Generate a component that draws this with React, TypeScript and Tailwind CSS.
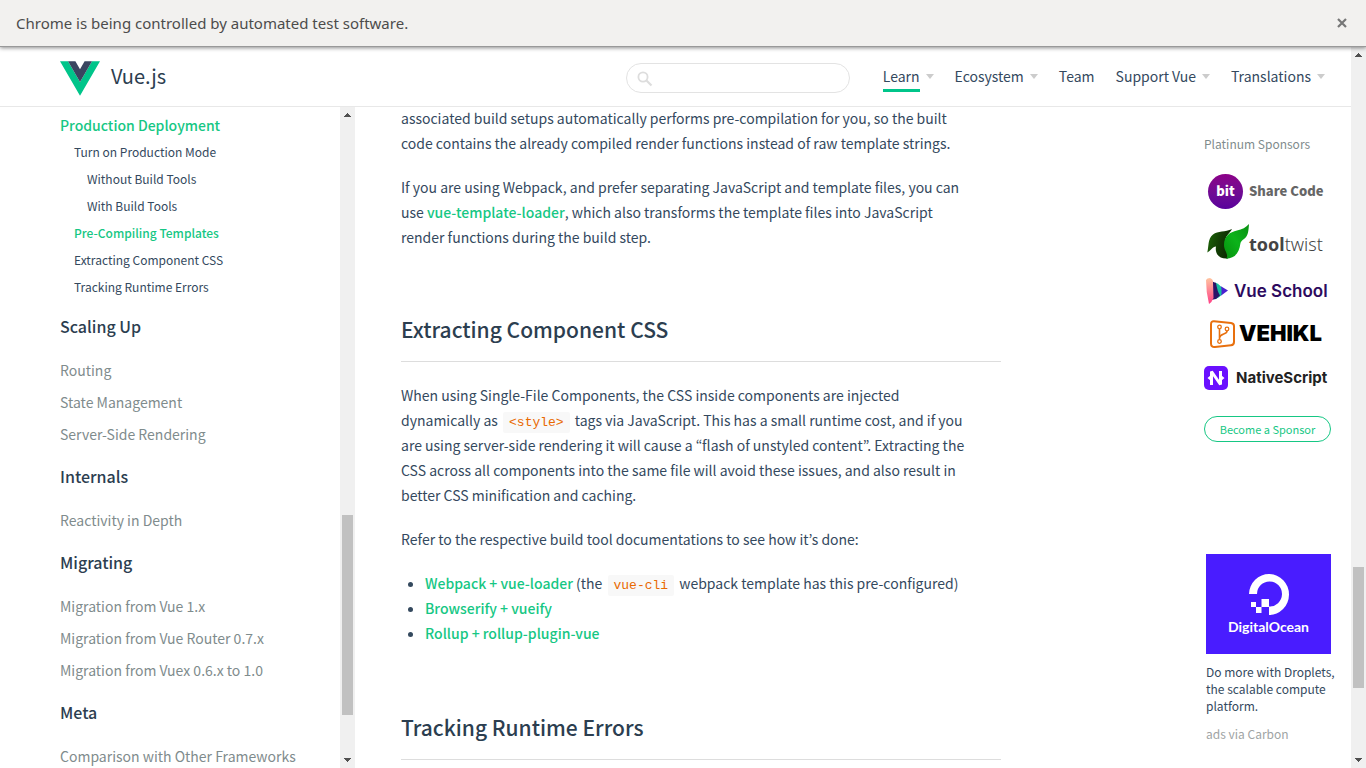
import React from "react";

const sans = "font-['Noto_Sans_CJK_JP','Noto_Sans',sans-serif]";

function Caret() {
  return (
    <svg width="8" height="5" viewBox="0 0 8 5" className="mt-0.5 ml-1.5" aria-hidden="true">
      <path d="M0 0H8L4 5Z" fill="#ccc" />
    </svg>
  );
}

function VueLogo() {
  return (
    <svg width="40" height="35" viewBox="0 0 400 346" className="mt-0.5" aria-hidden="true">
      <path d="M0 0H80L200 208L320 0H400L200 346Z" fill="#00c58a" />
      <path d="M80 0H154L200 80L246 0H320L200 208Z" fill="#3a4560" />
    </svg>
  );
}

function Arrow({ down }: { down?: boolean }) {
  return (
    <svg width="7" height="4" viewBox="0 0 7 4" shapeRendering="crispEdges" aria-hidden="true">
      <path d={down ? "M0 0H7V1H6V2H5V3H4V4H3V3H2V2H1V1H0Z" : "M3 0H4V1H5V2H6V3H7V4H0V3H1V2H2V1H3Z"} fill="#505050" />
    </svg>
  );
}

function ScrollTrack({ above, thumb, below }: { above: string; thumb: string; below: string }) {
  return (
    <div className="flex w-[15px] shrink-0 flex-col items-center bg-[#f0f0f0] py-1.5" aria-hidden="true">
      <Arrow />
      <div className={above} />
      <div className={"w-[11px] bg-[#c1c1c1] " + thumb} />
      <div className={below} />
      <Arrow down />
    </div>
  );
}

const nav = [
  { label: "Learn", menu: true, active: true },
  { label: "Ecosystem", menu: true },
  { label: "Team" },
  { label: "Support Vue", menu: true },
  { label: "Translations", menu: true },
];

function Header() {
  return (
    <header className="flex h-[60px] shrink-0 items-center border-b border-[#e8e8e8] bg-white pt-0.5 pr-[26px] pl-[60px]">
      <a href="#" className="flex items-center gap-[11px] text-xl text-[#2c3e50]">
        <VueLogo />
        <span className="pb-1">Vue.js</span>
      </a>
      <div className="relative ml-auto">
        <svg width="16" height="16" viewBox="0 0 16 16" className="absolute top-2 left-[11px]" aria-hidden="true">
          <circle cx="6" cy="6" r="4.6" fill="none" stroke="#ddd" strokeWidth="1.8" />
          <path d="M9.5 9.5L14.5 14.5" stroke="#ddd" strokeWidth="2.2" />
        </svg>
        <input
          type="text"
          aria-label="Search"
          className="block h-[30px] w-56 rounded-full border border-[#e3e3e3] bg-transparent pr-4 pl-8 text-sm outline-none"
        />
      </div>
      <nav className="ml-[33px] flex items-center gap-[21px] pb-1 text-sm leading-6 text-[#34495e]">
        {nav.map((n) => (
          <div key={n.label} className="flex items-center">
            <a href="#" className={n.active ? "border-b-3 border-[#00c58a] pt-1 pb-px" : ""}>
              {n.label}
            </a>
            {n.menu && <Caret />}
          </div>
        ))}
      </nav>
    </header>
  );
}

const sub = [
  { label: "Turn on Production Mode", cls: "pl-3.5" },
  { label: "Without Build Tools", cls: "pl-[27px]" },
  { label: "With Build Tools", cls: "pl-[27px]" },
  { label: "Pre-Compiling Templates", cls: "pl-3.5 font-medium text-[#16c784]" },
  { label: "Extracting Component CSS", cls: "pl-3.5" },
  { label: "Tracking Runtime Errors", cls: "pl-3.5" },
];

const groups = [
  { title: "Scaling Up", items: ["Routing", "State Management", "Server-Side Rendering"] },
  { title: "Internals", items: ["Reactivity in Depth"] },
  { title: "Migrating", items: ["Migration from Vue 1.x", "Migration from Vue Router 0.7.x", "Migration from Vuex 0.6.x to 1.0"] },
  { title: "Meta", items: ["Comparison with Other Frameworks"] },
];

function Sidebar() {
  return (
    <div className="w-[340px] shrink-0 overflow-hidden pt-1 pl-[60px]">
      <a href="#" className="flex h-[27px] items-center text-sm font-medium text-[#16c784]">
        Production Deployment
      </a>
      <ul className="text-xs text-[#34495e]">
        {sub.map((s) => (
          <li key={s.label} className={"flex h-[27px] items-center " + s.cls}>
            <a href="#">{s.label}</a>
          </li>
        ))}
      </ul>
      {groups.map((g) => (
        <section key={g.title}>
          <h3 className="mt-3 mb-3.5 flex h-7 items-center text-base font-medium text-[#2c3e50]">{g.title}</h3>
          <ul className="text-sm text-[#7f8c8d]">
            {g.items.map((i) => (
              <li key={i} className="flex h-8 items-center">
                <a href="#">{i}</a>
              </li>
            ))}
          </ul>
        </section>
      ))}
    </div>
  );
}

function Code({ children }: { children: string }) {
  return (
    <code className="mx-0.5 rounded-xs bg-[#f8f8f8] px-1.5 py-[3px] font-['Liberation_Mono',monospace] text-[13px] leading-none text-[#e96900]">
      {children}
    </code>
  );
}

function Link({ children }: { children: string }) {
  return (
    <a href="#" className="font-medium text-[#16c784]">
      {children}
    </a>
  );
}

function Article() {
  return (
    <main className="min-w-0 flex-1 overflow-hidden pl-[46px] text-sm leading-[25px] text-[#34495e]">
      <div className="-mt-px max-w-[600px]">
        <p className="mb-[19px] max-w-[572px]">
          associated build setups automatically performs pre-compilation for you, so the built code contains the already
          compiled render functions instead of raw template strings.
        </p>
        <p className="max-w-[572px]">
          If you are using Webpack, and prefer separating JavaScript and template files, you can use{" "}
          <Link>vue-template-loader</Link>, which also transforms the template files into JavaScript render functions
          during the build step.
        </p>
        <h2 className="mt-[63px] mb-[21px] border-b border-[#ddd] pb-4 text-[21px] leading-8 font-medium text-[#2c3e50]">
          Extracting Component CSS
        </h2>
        <p className="mb-[19px] max-w-[572px]">
          When using Single-File Components, the CSS inside components are injected dynamically as{" "}
          <Code>{"<style>"}</Code> tags via JavaScript. This has a small runtime cost, and if you are using server-side
          rendering it will cause a “flash of unstyled content”. Extracting the CSS across all components into the same
          file will avoid these issues, and also result in better CSS minification and caching.
        </p>
        <p className="mb-[19px]">Refer to the respective build tool documentations to see how it’s done:</p>
        <ul className="list-disc pl-6">
          <li>
            <Link>Webpack + vue-loader</Link> (the <Code>vue-cli</Code> webpack template has this pre-configured)
          </li>
          <li>
            <Link>Browserify + vueify</Link>
          </li>
          <li>
            <Link>Rollup + rollup-plugin-vue</Link>
          </li>
        </ul>
        <h2 className="mt-[65px] border-b border-[#ddd] pb-4 text-[21px] leading-8 font-medium text-[#2c3e50]">
          Tracking Runtime Errors
        </h2>
      </div>
    </main>
  );
}

function Sponsors() {
  return (
    <aside className="mr-5 w-[127px] shrink-0 pt-[27px] text-xs">
      <h4 className="leading-5 text-[#7f8c8d]">Platinum Sponsors</h4>
      <a href="#" className="mt-5 flex h-[35px] items-center gap-1.5 pl-1 text-[13px] font-black text-[#666]">
        <span className="flex size-[35px] shrink-0 items-center justify-center rounded-full bg-linear-to-b from-[#8c0088] to-[#59009c] pb-0.5 text-white">
          bit
        </span>
        <span className="pb-0.5 whitespace-nowrap">Share Code</span>
      </a>
      <a href="#" className="mt-[15px] flex h-9 items-center pl-[3px] font-['Noto_Sans',sans-serif] text-lg text-[#444]">
        <svg width="42" height="36" viewBox="0 0 42 36" className="shrink-0" aria-hidden="true">
          <defs>
            <linearGradient id="leafDark" x1="0" y1="0" x2="1" y2="0.3">
              <stop offset="0" stopColor="#1f6a0a" />
              <stop offset="0.6" stopColor="#123c04" />
              <stop offset="1" stopColor="#0a2a00" />
            </linearGradient>
            <linearGradient id="leafLight" x1="0" y1="1" x2="1" y2="0">
              <stop offset="0" stopColor="#06900e" />
              <stop offset="0.5" stopColor="#0cb31a" />
              <stop offset="1" stopColor="#089012" />
            </linearGradient>
          </defs>
          <path d="M0.3 28.5C2 22 0.5 15 6 10.5C11 6.500 18 8.500 25 5C23 9 19 11 18.500 16C18 22 21 28 21 34.500C13 35.500 7.500 30 9 22.500C5.500 22.500 3.500 27 0.3 28.500Z" fill="url(#leafDark)" />
          <path d="M42 0C41.500 6 41.500 12 37 15C35 16.500 33.500 17.500 33.300 20C32.500 27 29 34.500 19 34.800C22.500 31 17 27 17 21C17 12 23 8 30 6.500C35 5.500 39 3.500 42 0Z" fill="url(#leafLight)" />
        </svg>
        <span className="pt-1">
          <b>tool</b>
          <span className="font-light">twist</span>
        </span>
      </a>
      <a href="#" className="mt-[18px] flex h-[26px] items-center gap-1.5 pl-0.5 font-['Inter',sans-serif] text-[17px] font-semibold text-[#2d0a5e]">
        <svg width="22" height="26" viewBox="0 0 22 26" className="shrink-0" aria-hidden="true">
          <defs>
            <linearGradient id="peach" x1="0" y1="0" x2="0" y2="1">
              <stop offset="0" stopColor="#ffc5a0" />
              <stop offset="1" stopColor="#ff3f86" />
            </linearGradient>
          </defs>
          <path d="M14.500 8L22 12.500L14.500 18Z" fill="#4b20d0" />
          <path d="M9 4.500Q15.500 7 15.500 11V16Q15 19 9 21Z" fill="#16bfa0" />
          <path d="M5 3L10 5Q11.500 14 14 17.500L10 21L5 22Z" fill="#2c1268" />
          <path d="M0 2Q1 0 4 0Q7 1 7 4L7.500 20Q6 24 3 26Q0 14 0 2Z" fill="url(#peach)" />
        </svg>
        <span className="whitespace-nowrap">Vue School</span>
      </a>
      <a href="#" className="mt-4 flex h-7 items-center gap-1 pl-1.5 font-['Inter',sans-serif] text-[22px] font-black text-black">
        <svg width="25" height="28" viewBox="0 0 25 28" className="shrink-0" fill="none" stroke="#e8700e" aria-hidden="true">
          <path d="M4 1.2L21 3Q24 3.4 24 6V22Q24 25 21 25.3L5 27Q1 27.2 1 23.5V4.500Q1 1 4 1.2Z" strokeWidth="2" />
          <circle cx="9.500" cy="7" r="1.800" strokeWidth="1.300" />
          <circle cx="17" cy="9" r="1.800" strokeWidth="1.300" />
          <circle cx="9.500" cy="21.500" r="1.800" strokeWidth="1.300" />
          <path d="M9.500 9V19.500M17 11C17 15 10 13 9.500 18" strokeWidth="1.600" />
        </svg>
        VEHIKL
      </a>
      <a href="#" className="mt-[18px] flex h-6 items-center gap-2 font-['Inter',sans-serif] text-[15px] font-bold text-[#222]">
        <svg width="24" height="24" viewBox="0 0 24 24" className="shrink-0" aria-hidden="true">
          <rect width="24" height="24" rx="5" fill="#6a10ff" />
          <path d="M7.500 19V5.500L16.500 18.500V5" fill="none" stroke="#fff" strokeWidth="3" strokeLinejoin="bevel" />
          <path d="M6.500 9.500V14.500L3.500 12ZM17.500 9.500V14.500L20.500 12Z" fill="#fff" />
        </svg>
        <span className="whitespace-nowrap">NativeScript</span>
      </a>
      <a href="#" className="mt-[26px] flex h-[26px] items-center justify-center rounded-full border border-[#16c784] text-[11px] text-[#16c784]">
        Become a Sponsor
      </a>
      <div className="mt-28 pl-0.5">
        <a href="#" className="flex h-[100px] flex-col items-center bg-[#491cff] pt-[19px] font-['Lato',sans-serif] text-sm leading-5 font-bold text-white">
          <svg width="40" height="42" viewBox="0 0 40 42" className="mb-0.5" aria-hidden="true">
            <path d="M20 42V33.500A12.500 12.500 0 1 0 8 21H0A20 20.500 0 1 1 20 42Z" fill="#fff" />
            <path d="M12.500 26H20V34H12.500ZM7 34H12.500V40H7ZM2 29H7V34H2Z" fill="#fff" />
          </svg>
          DigitalOcean
        </a>
        <p className="mt-[9px] -mr-1 leading-[17px] text-[#34495e]">Do more with Droplets, the scalable compute platform.</p>
        <p className="mt-[11px] leading-[17px] text-[#a0a4a4]">ads via Carbon</p>
      </div>
    </aside>
  );
}

export default function App() {
  return (
    <div className={"flex h-screen flex-col overflow-hidden bg-white " + sans}>
      <div className="z-10 flex h-[47px] shrink-0 items-center justify-between border-b border-[#999] bg-[#f2f1ef] px-4 font-['Noto_Sans',sans-serif] text-[15px] text-[#4c4c4c] shadow-[0_1px_4px_rgba(0,0,0,0.45)]">
        Chrome is being controlled by automated test software.
        <button type="button" aria-label="Close" className="flex w-4 justify-center">
          <svg width="10" height="10" viewBox="0 0 10 10" aria-hidden="true">
            <path d="M1 1L9 9M9 1L1 9" stroke="#777" strokeWidth="2.200" />
          </svg>
        </button>
      </div>
      <div className="flex min-h-0 flex-1">
        <div className="flex min-w-0 flex-1 flex-col">
          <Header />
          <div className="flex min-h-0 flex-1">
            <Sidebar />
            <ScrollTrack above="grow-[398]" thumb="grow-[200]" below="grow-[43]" />
            <Article />
            <Sponsors />
          </div>
        </div>
        <ScrollTrack above="grow-[510]" thumb="grow-[121]" below="grow-[70]" />
      </div>
    </div>
  );
}
